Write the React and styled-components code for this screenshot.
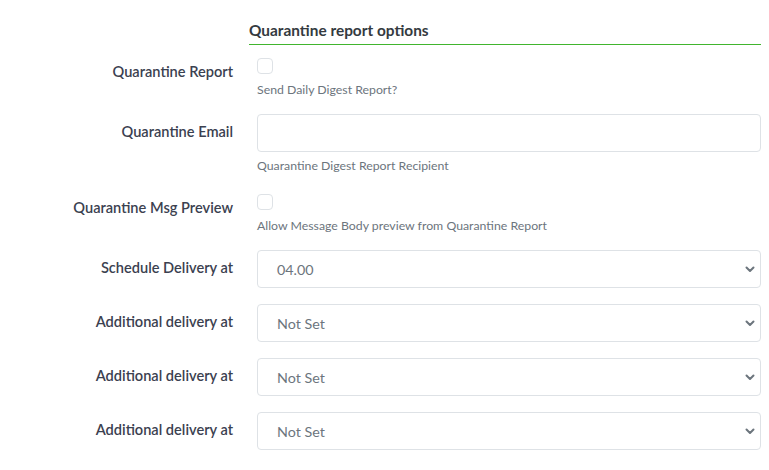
import React from 'react';
import styled, { createGlobalStyle } from 'styled-components';

const GlobalStyle = createGlobalStyle`
  body {
    margin: 0;
    background: #fff;
    font-family: Lato, "Noto Sans", sans-serif;
    color: #343a40;
  }
`;

const Page = styled.div`
  padding: 20px 8px 0 0;
`;

const Heading = styled.h5`
  margin: 0 0 9px 249px;
  padding-bottom: 4px;
  font-size: 15.4px;
  line-height: 20px;
  font-weight: 700;
  color: #343a40;
  border-bottom: 1px solid #41b52e;
`;

const Row = styled.div`
  display: grid;
  grid-template-columns: 257px 1fr;
  margin-bottom: 16px;
`;

const Label = styled.label`
  padding: 8px 24px 0 0;
  text-align: right;
  font-size: 14.6px;
  line-height: 20px;
  font-weight: 600;
  color: #3b4150;
`;

const Control = styled.div`
  display: flex;
  flex-direction: column;
`;

const CheckWrap = styled.div`
  height: 23px;
`;

const Check = styled.span`
  display: block;
  margin-top: 4px;
  width: 16px;
  height: 16px;
  box-sizing: border-box;
  border: 1px solid #dee2e6;
  border-radius: 4px;
  background: #fff;
`;

const Help = styled.small`
  display: block;
  margin-top: ${p => p.$gap || 4}px;
  font-size: 12.3px;
  line-height: 17px;
  color: #6c757d;
`;

const Field = styled.div`
  box-sizing: border-box;
  height: 38px;
  display: flex;
  align-items: center;
  justify-content: space-between;
  padding: 0 5px 0 19px;
  border: 1px solid #dee2e6;
  border-radius: 4px;
  background: #fff;
  font-size: 14.3px;
  color: #6c757d;
`;

const Chevron = () => (
  <svg width="10" height="7" viewBox="0 0 10 7">
    <path d="M1.5 1.5 L5 5 L8.5 1.5" fill="none" stroke="#6c757d" strokeWidth="2" strokeLinecap="round" strokeLinejoin="round" />
  </svg>
);

const CheckRow = ({ label, help }) => (
  <Row>
    <Label>{label}</Label>
    <Control>
      <CheckWrap>
        <Check />
      </CheckWrap>
      <Help>{help}</Help>
    </Control>
  </Row>
);

const SelectRow = ({ label, value }) => (
  <Row>
    <Label>{label}</Label>
    <Control>
      <Field>
        <span>{value}</span>
        <Chevron />
      </Field>
    </Control>
  </Row>
);

const selects = [
  { label: 'Schedule Delivery at', value: '04.00' },
  { label: 'Additional delivery at', value: 'Not Set' },
  { label: 'Additional delivery at', value: 'Not Set' },
  { label: 'Additional delivery at', value: 'Not Set' },
];

export default function App() {
  return (
    <Page>
      <GlobalStyle />
      <Heading>Quarantine report options</Heading>
      <CheckRow label="Quarantine Report" help="Send Daily Digest Report?" />
      <Row>
        <Label>Quarantine Email</Label>
        <Control>
          <Field />
          <Help $gap={5}>Quarantine Digest Report Recipient</Help>
        </Control>
      </Row>
      <CheckRow
        label="Quarantine Msg Preview"
        help="Allow Message Body preview from Quarantine Report"
      />
      {selects.map((s, i) => (
        <SelectRow key={i} label={s.label} value={s.value} />
      ))}
    </Page>
  );
}
